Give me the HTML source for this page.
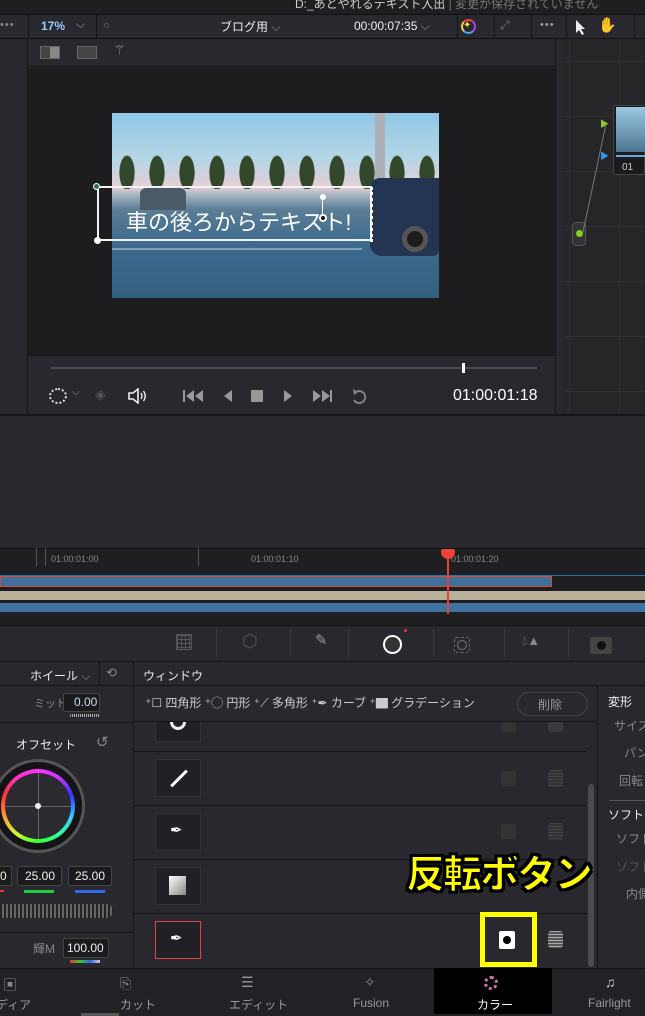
<!DOCTYPE html>
<html><head><meta charset="utf-8">
<style>
*{margin:0;padding:0;box-sizing:border-box}
body{width:645px;height:1016px;background:#28282e;position:relative;overflow:hidden;font-family:"Liberation Sans","Noto Sans CJK JP",sans-serif;color:#ddd;font-size:12px}
.a{position:absolute}
.t{position:absolute;white-space:nowrap}
.sep{position:absolute;background:#151517}
</style></head><body>
<!-- top title bar -->
<div class="a" style="left:0;top:0;width:645px;height:14px;background:#1f1f22"></div>
<div class="t" style="left:295px;top:-5px;font-size:12px;color:#ccc">D:_あとやれるテキスト入出 <span style="color:#777">| 変更が保存されていません</span></div>
<!-- toolbar -->
<div class="a" style="left:0;top:14px;width:645px;height:25px;background:#28282e;border-top:1px solid #111;border-bottom:1px solid #111"></div>
<div class="t" style="left:0;top:19px;color:#888;font-size:11px;letter-spacing:1px">•••</div>
<div class="sep" style="left:28px;top:15px;width:1px;height:24px"></div>
<div class="t" style="left:41px;top:19px;color:#9cf;font-size:12px;font-weight:bold">17%</div>
<div class="t" style="left:76px;top:17px;color:#999">⌵</div>
<div class="sep" style="left:96px;top:15px;width:1px;height:24px"></div>
<div class="a" style="left:104px;top:23px;width:5px;height:5px;border:1px solid #555;border-radius:50%"></div>
<div class="t" style="left:220px;top:18px;color:#eee;font-size:12px">ブログ用 <span style="color:#999">⌵</span></div>
<div class="t" style="left:354px;top:19px;color:#eee;font-size:12px">00:00:07:35 <span style="color:#999">⌵</span></div>
<div class="sep" style="left:457px;top:15px;width:1px;height:24px"></div>
<div class="a" style="left:461px;top:19px;width:15px;height:15px;border-radius:50%;border:2px solid;border-color:#e44 #a4e #4ae #ec4"></div>
<div class="t" style="left:463px;top:20px;color:#fd3;font-size:10px">✦</div>
<div class="sep" style="left:494px;top:15px;width:1px;height:24px"></div>
<div class="t" style="left:500px;top:18px;color:#777;font-size:12px">⤢</div>
<div class="sep" style="left:531px;top:15px;width:1px;height:24px"></div>
<div class="t" style="left:540px;top:19px;color:#999;font-size:11px;letter-spacing:1px">•••</div>
<div class="sep" style="left:566px;top:15px;width:1px;height:24px"></div>
<svg class="a" style="left:575px;top:19px" width="12" height="16"><path d="M1 1 L1 14 L4 11 L7 16 L9 15 L6 10 L10 10 Z" fill="#eee"/></svg>
<div class="t" style="left:598px;top:16px;color:#999;font-size:15px">✋</div>
<div class="sep" style="left:634px;top:15px;width:1px;height:24px"></div>
<!-- left strip -->
<div class="a" style="left:0;top:39px;width:28px;height:375px;background:#28282e;border-right:1px solid #151517"></div>
<!-- viewer -->
<div class="a" style="left:28px;top:39px;width:534px;height:28px;background:#28282e;border-bottom:1px solid #151517"></div>
<div class="a" style="left:40px;top:46px;width:20px;height:13px;border:1px solid #666;background:linear-gradient(90deg,#444 50%,#888 50%)"></div>
<div class="a" style="left:77px;top:46px;width:20px;height:13px;border:1px solid #666;background:#444"></div>
<div class="t" style="left:113px;top:42px;color:#888;font-size:14px">⚚</div>
<div class="a" style="left:28px;top:68px;width:527px;height:287px;background:#1d1d1f"></div>
<div class="a" style="left:555px;top:39px;width:7px;height:375px;background:#28282e;border-left:1px solid #151517"></div>
<!-- image -->
<div class="a" style="left:112px;top:113px;width:327px;height:185px;overflow:hidden;background:linear-gradient(180deg,#8fc7e6 0%,#b5d6e6 25%,#e6cfd6 40%,#aab8c4 44%,#5c7e96 52%,#3d6a8e 70%,#34607f 100%)">
  <div class="a" style="left:0;top:40px;width:327px;height:36px;background:radial-gradient(ellipse 8px 18px at 50% 55%,#33472b 90%,transparent 100%);background-size:30px 36px"></div>
  <div class="a" style="left:263px;top:0;width:10px;height:80px;background:#aab0b5"></div>
  <div class="a" style="left:28px;top:75px;width:46px;height:22px;background:#4a5a66;border-radius:6px 6px 2px 2px"></div>
  <div class="a" style="left:258px;top:65px;width:69px;height:78px;background:#233552;border-radius:10px 0 6px 12px"></div>
  <div class="a" style="left:290px;top:113px;width:26px;height:26px;border-radius:50%;background:#1c1c1c;border:5px solid #555"></div>
  <div class="a" style="left:0;top:135px;width:250px;height:2px;background:#c9d4dc;opacity:.5"></div>
</div>
<!-- mask shape -->
<div class="a" style="left:97px;top:186px;width:275px;height:55px;border:2px solid #f2f2f2"></div>
<div class="a" style="left:93px;top:183px;width:7px;height:7px;border-radius:50%;background:#2c6b60;border:1px solid #fff"></div>
<div class="a" style="left:94px;top:237px;width:7px;height:7px;border-radius:50%;background:#fff"></div>
<div class="a" style="left:320px;top:194px;width:6px;height:6px;border-radius:50%;background:#fff"></div>
<div class="a" style="left:322px;top:200px;width:1px;height:16px;background:#fff"></div>
<div class="a" style="left:319px;top:214px;width:8px;height:8px;border-radius:50%;background:#111;border:2px solid #fff"></div>
<div class="t" style="left:126px;top:205px;color:#fff;font-size:22px">車の後ろからテキスト!</div>
<div class="a" style="left:365px;top:187px;width:8px;height:55px;border-right:3px dotted #fff"></div>
<!-- transport -->
<div class="a" style="left:28px;top:355px;width:527px;height:59px;background:#28282e;border-top:1px solid #151517"></div>
<div class="a" style="left:51px;top:367px;width:486px;height:2px;background:#4a4a50"></div>
<div class="a" style="left:462px;top:363px;width:3px;height:10px;background:#fff"></div>
<div class="a" style="left:49px;top:388px;width:18px;height:16px;border-radius:50%;border:2px dotted #ddd"></div>
<div class="t" style="left:72px;top:387px;color:#999;font-size:10px">⌵</div>
<div class="t" style="left:95px;top:386px;color:#555;font-size:14px">◈</div>
<svg class="a" style="left:128px;top:388px" width="20" height="16"><path d="M1 5h4l5-4v14l-5-4H1z" fill="none" stroke="#eee" stroke-width="1.6"/><path d="M13 5q2 3 0 6M15.5 3q3.5 5 0 10" fill="none" stroke="#eee" stroke-width="1.4"/></svg>
<svg class="a" style="left:182px;top:388px" width="190" height="16" fill="#999">
<rect x="1" y="2" width="2" height="12"/><path d="M12 2v12L4 8zM21 2v12L13 8z"/>
<path d="M50 2v12L42 8z"/>
<rect x="69" y="2" width="12" height="12"/>
<path d="M102 2v12l8-6z"/>
<path d="M131 2v12l8-6zM140 2v12l8-6z"/><rect x="148" y="2" width="2" height="12"/>
<path d="M172 12a6 6 0 1 0 2-8" fill="none" stroke="#888" stroke-width="1.8"/><path d="M171 1l5 3-4 3z" fill="#888"/>
</svg>
<div class="t" style="left:453px;top:387px;color:#fff;font-size:16px">01:00:01:18</div>
<!-- node area -->
<div class="a" style="left:562px;top:39px;width:83px;height:375px;background:#262629;background-image:linear-gradient(#303034 1px,transparent 1px),linear-gradient(90deg,#303034 1px,transparent 1px);background-size:50px 55px;background-position:7px 22px"></div>
<div class="a" style="left:613px;top:105px;width:32px;height:70px;background:#1b1b1d;border:1px solid #444;border-radius:3px"></div>
<div class="a" style="left:616px;top:107px;width:29px;height:45px;background:linear-gradient(180deg,#9cc8e2,#4d7592)"></div>
<div class="a" style="left:616px;top:155px;width:29px;height:2px;background:#6aa8d8"></div>
<div class="t" style="left:622px;top:162px;color:#ccc;font-size:10px">01</div>
<div class="t" style="left:600px;top:117px;color:#8c2;font-size:9px">▶</div>
<div class="t" style="left:600px;top:149px;color:#39e;font-size:9px">▶</div>
<div class="a" style="left:572px;top:222px;width:14px;height:24px;background:#333;border:1px solid #555;border-radius:4px"></div>
<div class="a" style="left:576px;top:230px;width:7px;height:7px;border-radius:50%;background:#8c2"></div>
<svg class="a" style="left:580px;top:120px" width="30" height="120"><line x1="3" y1="112" x2="26" y2="4" stroke="#777"/></svg>
<!-- empty gap -->
<div class="a" style="left:0;top:414px;width:645px;height:134px;background:#28282e;border-top:2px solid #151517"></div>
<!-- timeline -->
<div class="a" style="left:0;top:548px;width:645px;height:78px;background:#1f1f22;border-top:1px solid #111"></div>
<div class="a" style="left:36px;top:548px;width:1px;height:18px;background:#555"></div>
<div class="a" style="left:45px;top:548px;width:1px;height:18px;background:#555"></div>
<div class="t" style="left:51px;top:554px;color:#888;font-size:9px">01:00:01:00</div>
<div class="a" style="left:198px;top:548px;width:1px;height:18px;background:#555"></div>
<div class="t" style="left:251px;top:554px;color:#888;font-size:9px">01:00:01:10</div>
<div class="t" style="left:451px;top:554px;color:#888;font-size:9px">01:00:01:20</div>
<div class="a" style="left:0;top:575px;width:645px;height:1px;background:#2a6fb0"></div>
<div class="a" style="left:0;top:576px;width:552px;height:11px;background:#3f709a;border:1px solid #d84a3a"></div>
<div class="a" style="left:0;top:591px;width:645px;height:9px;background:#b9b09a"></div>
<div class="a" style="left:0;top:603px;width:645px;height:9px;background:#3f729e"></div>
<div class="a" style="left:447px;top:556px;width:2px;height:58px;background:#e04438"></div>
<div class="a" style="left:441px;top:549px;width:14px;height:10px;background:#e84438;border-radius:2px 2px 7px 7px"></div>
<!-- palette bar -->
<div class="a" style="left:0;top:625px;width:645px;height:37px;background:#28282e;border-top:1px solid #111;border-bottom:1px solid #151517"></div>
<div class="a" style="left:176px;top:634px;width:16px;height:16px;border:1px solid #555;background-image:linear-gradient(#555 1px,transparent 1px),linear-gradient(90deg,#555 1px,transparent 1px);background-size:4px 4px"></div>
<div class="sep" style="left:216px;top:629px;width:1px;height:28px;background:#3a3a3f"></div>
<div class="t" style="left:242px;top:631px;color:#555;font-size:18px">⬡</div>
<div class="sep" style="left:290px;top:629px;width:1px;height:28px;background:#3a3a3f"></div>
<div class="t" style="left:315px;top:631px;color:#999;font-size:15px">✎</div>
<div class="sep" style="left:348px;top:629px;width:1px;height:28px;background:#3a3a3f"></div>
<div class="a" style="left:383px;top:635px;width:19px;height:19px;border-radius:50%;border:2px solid #fff;background:#333"></div>
<div class="a" style="left:404px;top:629px;width:3px;height:3px;background:#e33;border-radius:50%"></div>
<div class="sep" style="left:433px;top:629px;width:1px;height:28px;background:#3a3a3f"></div>
<div class="a" style="left:454px;top:637px;width:16px;height:16px;border:1px dashed #666;border-radius:2px"></div>
<div class="a" style="left:457px;top:640px;width:10px;height:10px;border:1px solid #777;border-radius:50%"></div>
<div class="sep" style="left:504px;top:629px;width:1px;height:28px;background:#3a3a3f"></div>
<div class="t" style="left:522px;top:633px;color:#888;font-size:13px">💧︎▲</div>
<div class="sep" style="left:568px;top:629px;width:1px;height:28px;background:#3a3a3f"></div>
<div class="a" style="left:590px;top:637px;width:22px;height:17px;background:#444;border-radius:2px"></div>
<div class="a" style="left:597px;top:641px;width:9px;height:9px;background:#111;border-radius:50%"></div>
<!-- panel header -->
<div class="a" style="left:0;top:662px;width:645px;height:24px;background:#28282e;border-bottom:1px solid #151517"></div>
<div class="t" style="left:30px;top:667px;color:#eee;font-size:12px">ホイール <span style="color:#888">⌵</span></div>
<div class="sep" style="left:99px;top:662px;width:1px;height:24px;background:#151517"></div>
<div class="t" style="left:106px;top:665px;color:#888;font-size:13px">⟲</div>
<div class="sep" style="left:133px;top:662px;width:1px;height:354px;background:#151517"></div>
<div class="t" style="left:143px;top:667px;color:#eee;font-size:12px">ウィンドウ</div>
<!-- left panel -->
<div class="t" style="left:34px;top:695px;color:#888;font-size:11px">ミッド</div>
<div class="a" style="left:63px;top:693px;width:37px;height:19px;background:#1b1b1d;border:1px solid #444;border-radius:2px"></div>
<div class="t" style="left:74px;top:695px;color:#cde;font-size:12px">0.00</div>
<div class="a" style="left:70px;top:714px;width:30px;height:3px;background:repeating-linear-gradient(90deg,#aaa 0 1px,#333 1px 2px);border-radius:2px"></div>
<div class="a" style="left:0;top:722px;width:133px;height:1px;background:#151517"></div>
<div class="t" style="left:16px;top:736px;color:#eee;font-size:12px">オフセット</div>
<div class="t" style="left:96px;top:733px;color:#888;font-size:15px">↺</div>
<div class="a" style="left:-9px;top:759px;width:94px;height:94px;border-radius:50%;background:#141416;border:3px solid #555"></div>
<div class="a" style="left:1px;top:769px;width:74px;height:74px;border-radius:50%;background:conic-gradient(#f3f,#c3f,#33f,#3cf,#3f9,#3f3,#cf3,#f93,#f33,#f3c,#f3f);"></div>
<div class="a" style="left:5px;top:773px;width:66px;height:66px;border-radius:50%;background:#2a2a30"></div>
<div class="a" style="left:38px;top:773px;width:1px;height:66px;background:#666"></div>
<div class="a" style="left:5px;top:806px;width:66px;height:1px;background:#666"></div>
<div class="a" style="left:35px;top:803px;width:6px;height:6px;border-radius:50%;background:#eee"></div>
<div class="a" style="left:-20px;top:866px;width:32px;height:20px;background:#1b1b1d;border:1px solid #444"></div>
<div class="t" style="left:0;top:869px;color:#eee;font-size:12px">0</div>
<div class="a" style="left:0;top:890px;width:4px;height:2px;background:#e33"></div>
<div class="a" style="left:17px;top:866px;width:45px;height:20px;background:#1b1b1d;border:1px solid #444;border-radius:2px"></div>
<div class="t" style="left:25px;top:869px;color:#eee;font-size:12px">25.00</div>
<div class="a" style="left:24px;top:890px;width:30px;height:3px;background:#2c4"></div>
<div class="a" style="left:68px;top:866px;width:44px;height:20px;background:#1b1b1d;border:1px solid #444;border-radius:2px"></div>
<div class="t" style="left:75px;top:869px;color:#eee;font-size:12px">25.00</div>
<div class="a" style="left:75px;top:890px;width:30px;height:3px;background:#36e"></div>
<div class="a" style="left:-10px;top:904px;width:123px;height:14px;border-radius:7px;background:repeating-linear-gradient(90deg,#666 0 2px,#222 2px 4px)"></div>
<div class="a" style="left:0;top:932px;width:133px;height:1px;background:#151517"></div>
<div class="t" style="left:33px;top:940px;color:#888;font-size:12px">輝M</div>
<div class="a" style="left:63px;top:938px;width:46px;height:20px;background:#1b1b1d;border:1px solid #444;border-radius:2px"></div>
<div class="t" style="left:67px;top:941px;color:#eee;font-size:12px">100.00</div>
<div class="a" style="left:70px;top:960px;width:30px;height:3px;background:linear-gradient(90deg,#e33,#3c3,#36e,#ccc)"></div>
<!-- window list -->
<div class="a" style="left:134px;top:722px;width:452px;height:246px;background:#28282e"></div>
<div class="a" style="left:134px;top:751px;width:452px;height:1px;background:#151517"></div>
<div class="a" style="left:134px;top:805px;width:452px;height:1px;background:#151517"></div>
<div class="a" style="left:134px;top:859px;width:452px;height:1px;background:#151517"></div>
<div class="a" style="left:134px;top:913px;width:452px;height:1px;background:#151517"></div>
<div class="a" style="left:155px;top:722px;width:46px;height:20px;background:#212125;border:1px solid #333;border-top:none"></div>
<div class="a" style="left:170px;top:714px;width:16px;height:16px;border-radius:50%;border:3px solid #eee"></div>
<div class="a" style="left:155px;top:759px;width:46px;height:38px;background:#212125;border:1px solid #333"></div>
<div class="a" style="left:168px;top:777px;width:22px;height:3px;background:#fff;transform:rotate(-45deg)"></div>
<div class="a" style="left:155px;top:813px;width:46px;height:38px;background:#212125;border:1px solid #333"></div>
<div class="t" style="left:170px;top:821px;color:#fff;font-size:15px">✒</div>
<div class="a" style="left:155px;top:867px;width:46px;height:38px;background:#212125;border:1px solid #333"></div>
<div class="a" style="left:169px;top:876px;width:17px;height:19px;background:linear-gradient(135deg,#fff,#888)"></div>
<div class="a" style="left:155px;top:921px;width:46px;height:38px;background:#212125;border:1px solid #d44"></div>
<div class="t" style="left:170px;top:929px;color:#fff;font-size:15px">✒</div>
<div class="a" style="left:501px;top:717px;width:15px;height:15px;background:#333;border-radius:2px"></div>
<div class="a" style="left:548px;top:717px;width:15px;height:15px;background:#3a3a3e;border-radius:3px"></div>
<div class="a" style="left:501px;top:771px;width:15px;height:15px;background:#333;border-radius:2px"></div>
<div class="a" style="left:548px;top:770px;width:15px;height:17px;background:repeating-linear-gradient(#444 0 1px,#333 1px 3px);border-radius:3px"></div>
<div class="a" style="left:501px;top:824px;width:15px;height:15px;background:#333;border-radius:2px"></div>
<div class="a" style="left:548px;top:823px;width:15px;height:17px;background:repeating-linear-gradient(#444 0 1px,#333 1px 3px);border-radius:3px"></div>
<div class="a" style="left:548px;top:931px;width:15px;height:17px;background:repeating-linear-gradient(#aaa 0 1px,#555 1px 3px);border-radius:3px"></div>
<div class="a" style="left:480px;top:912px;width:57px;height:55px;border:5px solid #ff0"></div>
<div class="a" style="left:499px;top:931px;width:16px;height:18px;background:#fff;border-radius:2px"></div>
<div class="a" style="left:503px;top:936px;width:8px;height:8px;background:#000;border-radius:50%"></div>
<!-- window tools (drawn over list) -->
<div class="a" style="left:134px;top:686px;width:463px;height:36px;background:#28282e;border-bottom:1px solid #151517"></div>
<div class="t" style="left:145px;top:694px;color:#ccc;font-size:12px">⁺☐ 四角形 ⁺◯ 円形 ⁺⟋ 多角形 ⁺✒ カーブ ⁺▇ グラデーション</div>
<div class="a" style="left:517px;top:692px;width:71px;height:24px;border:1px solid #444;border-radius:12px"></div>
<div class="t" style="left:538px;top:696px;color:#999;font-size:12px">削除</div>
<!-- scrollbar -->
<div class="a" style="left:586px;top:722px;width:11px;height:246px;background:#28282e"></div>
<div class="a" style="left:588px;top:784px;width:6px;height:183px;background:#4a4a50;border-radius:3px"></div>
<div class="a" style="left:597px;top:686px;width:1px;height:282px;background:#151517"></div>
<!-- right panel -->
<div class="t" style="left:608px;top:693px;color:#eee;font-size:12px">変形</div>
<div class="t" style="left:614px;top:717px;color:#888;font-size:12px">サイズ</div>
<div class="t" style="left:624px;top:744px;color:#888;font-size:12px">パン</div>
<div class="t" style="left:619px;top:772px;color:#888;font-size:12px">回転</div>
<div class="a" style="left:609px;top:800px;width:36px;height:1px;background:#555"></div>
<div class="t" style="left:608px;top:806px;color:#eee;font-size:12px">ソフトネ</div>
<div class="t" style="left:616px;top:830px;color:#888;font-size:12px">ソフト</div>
<div class="t" style="left:616px;top:858px;color:#555;font-size:12px">ソフト</div>
<div class="t" style="left:626px;top:885px;color:#888;font-size:12px">内側</div>
<!-- big annotation -->
<div class="t" style="left:406px;top:844px;font-size:39px;font-weight:900;color:#ff0;letter-spacing:-2px;-webkit-text-stroke:2px #000;text-shadow:2px 2px 0 #000,-2px -2px 0 #000,2px -2px 0 #000,-2px 2px 0 #000">反転ボタン</div>
<!-- bottom nav -->
<div class="a" style="left:0;top:968px;width:645px;height:48px;background:#222226;border-top:1px solid #111"></div>
<div class="a" style="left:434px;top:968px;width:118px;height:46px;background:#000"></div>
<div class="t" style="left:3px;top:975px;color:#888;font-size:14px">▣</div>
<div class="t" style="left:-4px;top:996px;color:#999;font-size:12px">ディア</div>
<div class="t" style="left:120px;top:975px;color:#888;font-size:14px">⎘</div>
<div class="t" style="left:120px;top:996px;color:#999;font-size:12px">カット</div>
<div class="a" style="left:81px;top:1013px;width:38px;height:3px;background:#555"></div>
<div class="t" style="left:241px;top:974px;color:#999;font-size:14px">☰</div>
<div class="t" style="left:229px;top:996px;color:#999;font-size:12px">エディット</div>
<div class="t" style="left:364px;top:974px;color:#888;font-size:14px">✧</div>
<div class="t" style="left:353px;top:996px;color:#999;font-size:12px">Fusion</div>
<div class="a" style="left:484px;top:976px;width:14px;height:14px;border-radius:50%;border:3px dotted #c7a"></div>
<div class="t" style="left:477px;top:996px;color:#fff;font-size:12px">カラー</div>
<div class="t" style="left:605px;top:974px;color:#ccc;font-size:14px">♫</div>
<div class="t" style="left:588px;top:996px;color:#999;font-size:12px">Fairlight</div>
</body></html>
